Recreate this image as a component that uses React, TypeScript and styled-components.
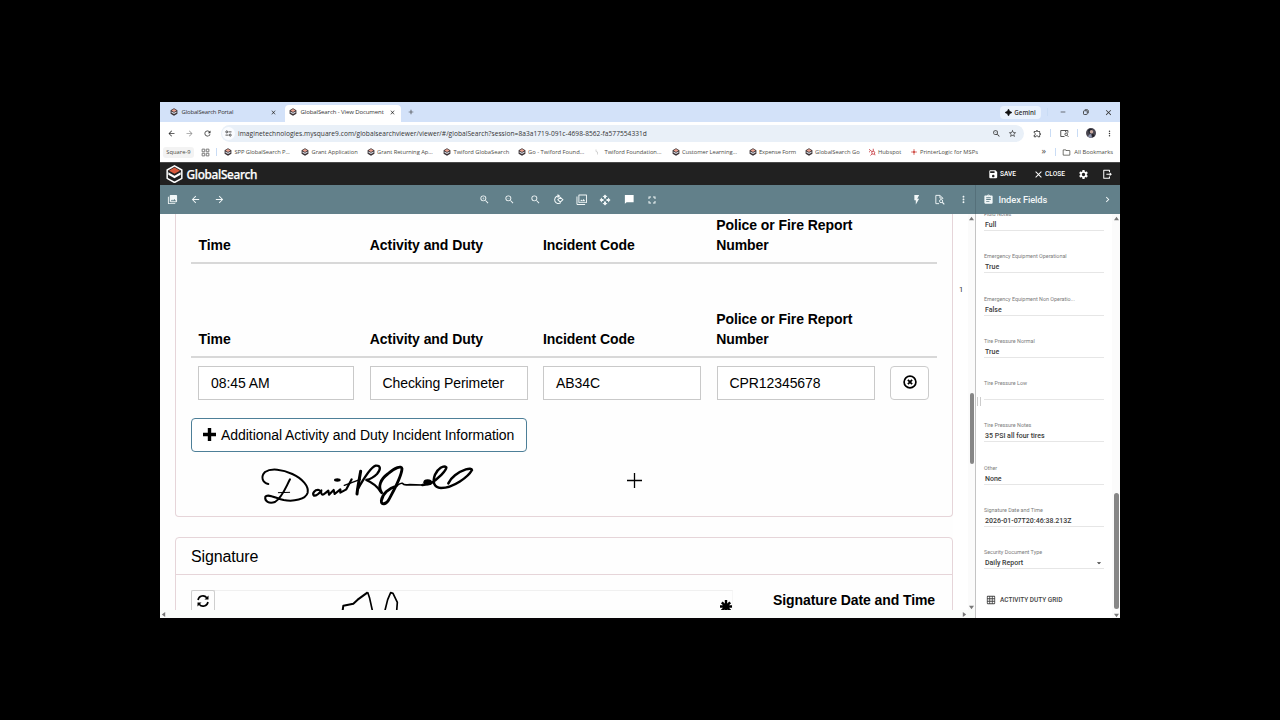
import React from "react";
import styled, { createGlobalStyle } from "styled-components";
import {
  MdPhotoLibrary, MdArrowBack, MdArrowForward, MdZoomIn, MdZoomOut, MdSearch, MdOpenWith,
  MdFullscreen, MdFlashOn, MdMoreVert, MdAssignment, MdChevronRight,
  MdSave, MdClose, MdSettings, MdRefresh, MdStarBorder, MdOutlineExtension, MdOutlineFolder, MdGridOn,
  MdFilter, MdRemove, MdAdd, MdArrowDropDown,
} from "react-icons/md";

const Global = createGlobalStyle`
  *{box-sizing:border-box}
  html,body{margin:0;background:#000;overflow:hidden}
`;

const Stage = styled.div`
  width:1280px;height:720px;padding:102px 160px;background:#000;
`;
const Browser = styled.div`
  width:960px;height:516px;display:flex;flex-direction:column;background:#fff;overflow:hidden;
  font-family:"Open Sans","Noto Sans",sans-serif;color:#333;
`;
const Spacer = styled.div<{ $w?: number }>`
  ${p => (p.$w === undefined ? "flex:1" : `flex:none;width:${p.$w}px`)};
`;
const IconSlot = styled.span<{ $w: number; $size: number; $color?: string }>`
  flex:none;width:${p => p.$w}px;display:flex;align-items:center;justify-content:center;
  color:${p => p.$color ?? "inherit"};
  svg{width:${p => p.$size}px;height:${p => p.$size}px;flex:none}
`;
const Label = styled.span<{ $size: number; $track?: number; $weight?: number; $color?: string; $w?: number }>`
  flex:none;white-space:nowrap;font-size:${p => p.$size}px;letter-spacing:${p => p.$track ?? 0}px;
  font-weight:${p => p.$weight ?? 400};color:${p => p.$color ?? "inherit"};
  ${p => (p.$w ? `width:${p.$w}px` : "")};
`;
const Divider = styled.span`
  flex:none;width:1px;height:8px;background:#c9dcf5;
`;

/* tab strip */
const TabStrip = styled.div`
  height:20px;flex:none;display:flex;align-items:center;background:#d3e2f9;
`;
const Tab = styled.div<{ $active?: boolean; $w: number }>`
  width:${p => p.$w}px;height:${p => (p.$active ? 17 : 20)}px;align-self:flex-end;flex:none;display:flex;align-items:center;
  padding-left:${p => (p.$active ? 4 : 10)}px;padding-bottom:${p => (p.$active ? 3 : 0)}px;
  background:${p => (p.$active ? "#fff" : "transparent")};border-radius:4px 4px 0 0;
`;
const GeminiPill = styled.div`
  width:41px;height:13px;border-radius:4px;background:#eaf2fd;display:flex;align-items:center;justify-content:center;gap:2px;
`;

/* address row */
const AddressRow = styled.div`
  height:22px;flex:none;display:flex;align-items:center;background:#fff;border-top-right-radius:4px;
`;
const AddressPill = styled.div`
  width:803px;height:17px;flex:none;border-radius:9px;background:#e9f0f8;display:flex;align-items:center;
`;
const SiteBadge = styled.span`
  width:13px;height:13px;margin:0 3px 0 1px;border-radius:50%;background:#fafcff;display:flex;align-items:center;justify-content:center;
`;

/* bookmarks */
const BookmarkBar = styled.div`
  height:18px;flex:none;display:flex;align-items:center;padding:0 7px 2px 3px;color:#4b4b45;
`;
const Chip = styled.span`
  width:31px;height:11px;border-radius:3px;background:#f3f3f3;display:flex;align-items:center;justify-content:center;
`;
const Bookmark = styled.div<{ $w: number }>`
  width:${p => p.$w}px;flex:none;display:flex;align-items:center;gap:2.5px;
  svg{flex:none}
`;
const More = styled.span`
  flex:none;font-size:9px;line-height:10px;margin-top:-2px;
`;

/* application header */
const AppHeader = styled.div`
  height:23px;flex:none;display:flex;align-items:center;background:#212121;border-top:1px solid #4a4a4a;color:#fff;
  font-family:Roboto,sans-serif;
`;
const Brand = styled.span`
  font-family:"Noto Sans","Open Sans",sans-serif;font-size:11.8px;line-height:20px;font-weight:500;letter-spacing:-0.3px;color:#fff;width:90px;
  -webkit-text-stroke:.25px #fff;
`;

/* tools */
const Tools = styled.div`
  height:29px;flex:none;display:flex;align-items:center;background:#62808a;color:#f2f7f8;font-family:Roboto,sans-serif;
`;
const PaneTools = styled.div`
  width:816px;height:100%;display:flex;align-items:center;border-right:1px solid #55707a;
`;
const PanelTitle = styled.div`
  flex:1;display:flex;align-items:center;
`;

/* body */
const Body = styled.div`
  flex:1;min-height:0;display:flex;
`;
const Viewer = styled.div`
  width:815px;flex:none;display:flex;flex-direction:column;
`;
const ViewerMain = styled.div`
  height:396px;flex:none;display:flex;
`;
const Page = styled.div`
  width:793px;flex:none;height:100%;overflow:hidden;padding-left:15px;background:#fefefe;color:#000;
  font-family:"Liberation Sans",Arial,sans-serif;font-size:14px;
`;
const Gutter = styled.div`
  width:15px;flex:none;padding:71px 0 0 6px;font-family:Roboto,sans-serif;font-size:7.5px;line-height:10px;color:#333;
`;
const Card = styled.section<{ $h: number; $top?: boolean }>`
  width:778px;height:${p => p.$h}px;border:1px solid #e6d5d9;background:#fefefe;
  ${p => (p.$top ? "border-top:0;border-radius:0 0 4px 4px;margin-bottom:20px;padding:0 15px" : "border-radius:4px 4px 0 0")};
`;
const HeadRow = styled.div<{ $h: number }>`
  display:grid;grid-template-columns:171.3px 173.2px 173.2px 173.6px 1fr;align-items:end;height:${p => p.$h}px;
  padding:0 0 7px 7.5px;border-bottom:2px solid #d8d8d8;font-weight:700;line-height:20px;letter-spacing:-0.07px;
`;
const Gap = styled.div<{ $h: number }>`
  height:${p => p.$h}px;
`;
const EntryRow = styled.div`
  display:grid;grid-template-columns:156px 158px 158px 158px 39px;column-gap:15.5px;padding:8px 0 0 7px;
`;
const Input = styled.div`
  height:34px;border:1px solid #c9c9c9;padding-left:12px;line-height:33px;letter-spacing:-0.08px;background:#fff;
`;
const SquareButton = styled.button`
  height:34px;padding:0;border:1px solid #ccc;border-radius:4px;background:#fff;display:flex;align-items:center;justify-content:center;
`;
const AddButton = styled.button`
  width:336px;height:34px;margin-top:18px;padding:0 0 0 11px;border:1px solid #4d7f98;border-radius:4px;background:#fff;color:#000;
  display:flex;align-items:center;gap:5px;font:14px "Liberation Sans",Arial,sans-serif;letter-spacing:-0.05px;white-space:nowrap;
`;
const Scribble = styled.svg`
  display:block;margin:8px 0 0 62px;
`;
const CardTitle = styled.div`
  height:37px;padding-left:15px;border-bottom:1px solid #e6d5d9;font-size:16px;line-height:37px;letter-spacing:-0.15px;
`;
const SignRow = styled.div`
  display:flex;padding:15px 0 0 15px;
`;
const SignPad = styled.div`
  width:542px;height:40px;border-top:1px solid #f0f0f0;border-right:1px solid #f6f6f6;display:flex;
`;
const ResetButton = styled.div`
  width:24px;height:30px;margin-top:-1px;border:1px solid #cfcfcf;border-bottom:0;border-radius:2px;padding:3px 0 0 5px;
`;
const SignLabel = styled.div`
  margin:0 0 0 40px;font-weight:700;line-height:20px;letter-spacing:-0.08px;
`;

const Scroll = styled.div<{ $w: number }>`
  width:${p => p.$w}px;flex:none;display:flex;flex-direction:column;align-items:center;background:#fbfbfb;padding-top:2px;
`;
const Thumb = styled.div<{ $w: number; $h: number }>`
  width:${p => p.$w}px;height:${p => p.$h}px;flex:none;border-radius:3px;background:#868686;
`;
const HScroll = styled.div`
  flex:1;display:flex;align-items:center;justify-content:space-between;padding:0 8px 0 1px;background:#f8fbf8;
`;

const Panel = styled.aside`
  position:relative;flex:1;display:flex;border-left:1px solid #c4c4c4;background:#fff;font-family:Roboto,sans-serif;overflow:hidden;
`;
const Fields = styled.div`
  width:136px;flex:none;padding-left:8px;margin-top:-3px;
`;
const Field = styled.div`
  height:42.25px;width:120px;
`;
const FieldName = styled.div`
  height:7px;line-height:6px;font-size:5.4px;letter-spacing:0;color:#7c7c7c;white-space:nowrap;
`;
const FieldValue = styled.div`
  height:13px;padding:2px 0 0 1px;line-height:10px;font-size:7px;font-weight:500;color:#3a3a3a;border-bottom:1px solid #e6e6e6;
  display:flex;justify-content:space-between;white-space:nowrap;
`;
const GridButton = styled.div`
  height:18px;display:flex;align-items:center;padding-left:2px;gap:4px;color:#444;
`;
const Grip = styled.div`
  position:absolute;left:1px;top:183px;width:4px;height:9px;border:solid #ccc;border-width:0 1px;
`;
const Cursor = styled.svg`
  display:block;margin:-37px 0 0 436px;
`;

const Cube = ({ s = 8 }: { s?: number }) => (
  <svg width={s} height={s} viewBox="0 0 16 16">
    <path d="M8 .5 14.8 4.3v7.4L8 15.5 1.2 11.7V4.3Z" fill="#3a3234" />
    <path d="M8 2.2 13 5 8 7.8 3 5Z" fill="#e9a08f" />
    <path d="M3 6.8 8 9.7 13 6.8v2.5L8 12.2 3 9.3Z" fill="#d9dbe4" />
  </svg>
);
const Logo = () => (
  <svg width="17" height="18" viewBox="0 0 51 54">
    <path d="M25.5 2.5 47.5 15v25L25.5 52.5 3.5 40V15Z" fill="#212121" stroke="#fff" strokeWidth="4.5" strokeLinejoin="round" />
    <path d="M25.5 7.5 42 17 25.5 26.5 9 17Z" fill="#d8593c" />
    <path d="M7 22 25.5 32.5 44 22v7L25.5 39.5 7 29Z" fill="#fff" />
  </svg>
);
const Sparkle = () => (
  <svg width="7" height="7" viewBox="0 0 10 10"><path d="M5 0Q5.8 4.2 10 5 5.8 5.8 5 10 4.2 5.8 0 5 4.2 4.2 5 0Z" fill="#111" stroke="#111" strokeWidth=".8" /></svg>
);
const Restore = () => (
  <svg viewBox="0 0 12 12" fill="none" stroke="#333" strokeWidth="1.7"><rect x="1" y="3.5" width="7.5" height="7.5" rx="1.5" /><path d="M3.5 1.5h5a2 2 0 0 1 2 2v5" /></svg>
);
const Tune = () => (
  <svg width="7" height="7" viewBox="0 0 14 14" fill="none" stroke="#444" strokeWidth="1.8"><circle cx="3.5" cy="3.8" r="2" /><path d="M7 3.8h6M1 10.2h6" /><circle cx="10.5" cy="10.2" r="2" /></svg>
);
const GridNine = () => (
  <svg viewBox="0 0 24 24" fill="none" stroke="#777" strokeWidth="2.6"><path d="M3 3h7v7H3zM14 3h7v7h-7zM3 14h7v7H3zM14 14h7v7h-7z" /></svg>
);
const SidePanelSearch = () => (
  <svg viewBox="0 0 24 24" fill="none" stroke="#444" strokeWidth="2.4"><path d="M12 20H2V4h19v6M15 4v4" /><circle cx="16.5" cy="14" r="3.5" /><path d="m19 17 3.5 4" /></svg>
);
const Avatar = () => (
  <svg viewBox="0 0 20 20"><circle cx="10" cy="10" r="10" fill="#4a4650" /><path d="M4 4q5-5 9 0l-2 6-5 1z" fill="#20242c" /><circle cx="11" cy="7.5" r="3.5" fill="#c9a9a0" /><path d="M4 17q2-6 6-5l2 7q-5 1-8-2Z" fill="#8b93ad" /><path d="M12 12q5 0 5 4l-4 3Z" fill="#1d1b22" /></svg>
);
const Hub = () => (
  <svg width="8" height="8" viewBox="0 0 16 16" fill="none" stroke="#c8434a" strokeWidth="1.8"><circle cx="10.5" cy="9.5" r="3" /><path d="M10.5 6.5V1.5M2 2.5l6.3 5M8.3 11.5 5 15M13 11.5l1 3M2 7l2 1" /></svg>
);
const Printer = () => (
  <svg width="8" height="8" viewBox="0 0 16 16" stroke="#d2564f" strokeWidth="1.5"><path d="M8 2v12M2 8h12" /><circle cx="8" cy="8" r="2.5" fill="#d2564f" stroke="none" /></svg>
);
const Faint = () => (
  <svg width="8" height="8" viewBox="0 0 16 16" fill="none" stroke="#b9b9b9" strokeWidth="1.2"><path d="M4 3v4l3 1v5" /></svg>
);
const Exit = () => (
  <svg viewBox="0 0 24 24" fill="none" stroke="#fff" strokeWidth="2.3"><path d="M17 7V3H4v18h13v-4" strokeLinejoin="round" /><path d="M10 12h10" /><path d="m17.5 7.5 5 4.5-5 4.5Z" fill="#fff" stroke="none" /></svg>
);
const RotatePage = () => (
  <svg viewBox="0 0 24 24" fill="none" stroke="currentColor" strokeWidth="2.2"><path d="M11 4.5A8.2 8.2 0 1 0 17 19" /><path d="m10 0 6 4.5L10 9Z" fill="currentColor" stroke="none" /><path d="m16 7.500 5.500 5-5.500 5-5.500-5Z" /></svg>
);
const Note = () => (
  <svg viewBox="0 0 24 24"><path d="M2 2h20v17H6l-4 3.500Z" fill="#fff" /></svg>
);
const PageSearch = () => (
  <svg viewBox="0 0 24 24" fill="none" stroke="currentColor" strokeWidth="2"><path d="M11 21H4V3h9l6 6v2M13 3v6h6" /><circle cx="15.5" cy="15.5" r="3.4" /><path d="m18 18 4.5 4.5" strokeWidth="2.4" /></svg>
);
const Tri = ({ d }: { d: "up" | "down" | "left" | "right" }) => {
  const shape = { up: "M3 1 6 5H0Z", down: "M0 1h6L3 5Z", left: "M1 3 5 0v6Z", right: "M5 3 1 0v6Z" }[d];
  return <svg width="5" height="5" viewBox="0 0 6 6" style={{ flex: "none" }}><path d={shape} fill="#777" /></svg>;
};

const bookmarks: [string, number, React.ReactNode, number][] = [
  ["SPP GlobalSearch P...", 77, <Cube />, -0.08],
  ["Grant Application", 65.5, <Cube />, -0.06],
  ["Grant Returning Ap...", 76.5, <Cube />, -0.05],
  ["Twiford GlobaSearch", 74.5, <Cube />, -0.03],
  ["Go - Twiford Found...", 76.5, <Cube />, 0],
  ["Twiford Foundation...", 77.5, <Faint />, -0.03],
  ["Customer Learning...", 77, <Cube />, -0.06],
  ["Expense Form", 56, <Cube />, -0.12],
  ["GlobalSearch Go", 63, <Cube />, -0.02],
  ["Hubspot", 42, <Hub />, 0],
  ["PrinterLogic for MSPs", 70, <Printer />, 0],
];

const fields: [string, string][] = [
  ["Fluid Notes", "Full"],
  ["Emergency Equipment Operational", "True"],
  ["Emergency Equipment Non Operatio...", "False"],
  ["Tire Pressure Normal", "True"],
  ["Tire Pressure Low", ""],
  ["Tire Pressure Notes", "35 PSI all four tires"],
  ["Other", "None"],
  ["Signature Date and Time", "2026-01-07T20:46:38.213Z"],
  ["Security Document Type", "Daily Report"],
];

const Headings = () => (
  <HeadRow $h={50}>
    <span>Time</span><span>Activity and Duty</span><span>Incident Code</span><span>Police or Fire Report<br />Number</span>
  </HeadRow>
);

export default function App() {
  return (
    <Stage>
      <Global />
      <Browser>
        <TabStrip>
          <Tab $w={125}>
            <Cube /><Spacer $w={3.5} />
            <Label $size={6} $track={-0.18} $w={87}>GlobalSearch Portal</Label>
            <IconSlot $w={10} $size={7}><MdClose /></IconSlot>
          </Tab>
          <Tab $w={116} $active>
            <Cube /><Spacer $w={3.5} />
            <Label $size={6} $track={-0.1} $w={87}>GlobalSearch - View Document</Label>
            <IconSlot $w={10} $size={7}><MdClose /></IconSlot>
          </Tab>
          <Spacer $w={4.5} />
          <IconSlot $w={10} $size={8}><MdAdd /></IconSlot>
          <Spacer />
          <GeminiPill><Sparkle /><Label $size={6.2} $weight={600}>Gemini</Label></GeminiPill>
          <Spacer $w={6} /><Divider /><Spacer $w={8.5} />
          <IconSlot $w={12} $size={8}><MdRemove /></IconSlot>
          <Spacer $w={11} />
          <IconSlot $w={12} $size={6}><Restore /></IconSlot>
          <Spacer $w={11} />
          <IconSlot $w={12} $size={9}><MdClose /></IconSlot>
          <Spacer $w={5.5} />
        </TabStrip>

        <AddressRow>
          <Spacer $w={6} />
          <IconSlot $w={10} $size={9}><MdArrowBack /></IconSlot><Spacer $w={8} />
          <IconSlot $w={10} $size={9} $color="#999"><MdArrowForward /></IconSlot><Spacer $w={8} />
          <IconSlot $w={10} $size={9}><MdRefresh /></IconSlot><Spacer $w={9} />
          <AddressPill>
            <SiteBadge><Tune /></SiteBadge>
            <Label $size={6.6} $track={0.045}>imaginetechnologies.mysquare9.com/globalsearchviewer/viewer/#/globalSearch?session=8a3a1719-091c-4698-8562-fa577554331d</Label>
            <Spacer />
            <IconSlot $w={10} $size={9}><MdZoomOut /></IconSlot><Spacer $w={6} />
            <IconSlot $w={10} $size={9}><MdStarBorder /></IconSlot><Spacer $w={7} />
          </AddressPill>
          <Spacer $w={8} />
          <IconSlot $w={10} $size={9}><MdOutlineExtension /></IconSlot>
          <Spacer $w={8} /><Divider /><Spacer $w={8} />
          <IconSlot $w={10} $size={9}><SidePanelSearch /></IconSlot>
          <Spacer $w={8} /><Divider /><Spacer $w={7.5} />
          <IconSlot $w={11} $size={10}><Avatar /></IconSlot>
          <Spacer $w={7.5} />
          <IconSlot $w={10} $size={9}><MdMoreVert /></IconSlot>
        </AddressRow>

        <BookmarkBar>
          <Chip><Label $size={5.8} $track={0}>Square-9</Label></Chip>
          <Spacer $w={6} />
          <IconSlot $w={10} $size={9}><GridNine /></IconSlot>
          <Spacer $w={6} /><Divider /><Spacer $w={7} />
          {bookmarks.map(([name, w, icon, track]) => (
            <Bookmark key={name} $w={w}>{icon}<Label $size={5.8} $track={track}>{name}</Label></Bookmark>
          ))}
          <Spacer />
          <More>»</More>
          <Spacer $w={9} /><Divider /><Spacer $w={6} />
          <IconSlot $w={10} $size={9}><MdOutlineFolder /></IconSlot><Spacer $w={2.5} />
          <Label $size={5.8} $track={0}>All Bookmarks</Label>
        </BookmarkBar>

        <AppHeader>
          <Spacer $w={6} /><Logo /><Spacer $w={3.5} /><Brand>GlobalSearch</Brand>
          <Spacer />
          <IconSlot $w={10} $size={10.5}><MdSave /></IconSlot><Spacer $w={2} />
          <Label $size={6.6} $weight={500} $w={33}>SAVE</Label>
          <IconSlot $w={10} $size={11}><MdClose /></IconSlot><Spacer $w={2} />
          <Label $size={6.6} $weight={500} $w={32.5}>CLOSE</Label>
          <IconSlot $w={12} $size={11}><MdSettings /></IconSlot><Spacer $w={11.5} />
          <IconSlot $w={12} $size={10.5}><Exit /></IconSlot><Spacer $w={7} />
        </AppHeader>

        <Tools>
          <PaneTools>
            <Spacer $w={0.5} />
            <IconSlot $w={23.5} $size={11}><MdPhotoLibrary /></IconSlot>
            <IconSlot $w={23.5} $size={11}><MdArrowBack /></IconSlot>
            <IconSlot $w={23.5} $size={11}><MdArrowForward /></IconSlot>
            <Spacer $w={240.5} />
            <IconSlot $w={25} $size={11}><MdZoomIn /></IconSlot>
            <IconSlot $w={26} $size={11}><MdZoomOut /></IconSlot>
            <IconSlot $w={25} $size={11}><MdSearch /></IconSlot>
            <IconSlot $w={22.5} $size={11}><RotatePage /></IconSlot>
            <IconSlot $w={23.5} $size={11.5}><MdFilter /></IconSlot>
            <IconSlot $w={23.5} $size={12}><MdOpenWith /></IconSlot>
            <IconSlot $w={23.5} $size={10.5}><Note /></IconSlot>
            <IconSlot $w={23} $size={12}><MdFullscreen /></IconSlot>
            <Spacer />
            <IconSlot $w={23.5} $size={11.5}><MdFlashOn /></IconSlot>
            <IconSlot $w={23.5} $size={11}><PageSearch /></IconSlot>
            <IconSlot $w={23.5} $size={11}><MdMoreVert /></IconSlot>
          </PaneTools>
          <PanelTitle>
            <Spacer $w={7} />
            <IconSlot $w={11} $size={11}><MdAssignment /></IconSlot><Spacer $w={4.5} />
            <Label $size={9.3} $weight={500} $track={-0.1}>Index Fields</Label>
            <Spacer />
            <IconSlot $w={12} $size={11}><MdChevronRight /></IconSlot><Spacer $w={7} />
          </PanelTitle>
        </Tools>

        <Body>
          <Viewer>
            <ViewerMain>
              <Page>
                <Card $h={303} $top>
                  <Headings />
                  <Gap $h={44} />
                  <Headings />
                  <EntryRow>
                    <Input>08:45 AM</Input>
                    <Input>Checking Perimeter</Input>
                    <Input>AB34C</Input>
                    <Input>CPR12345678</Input>
                    <SquareButton>
                      <svg width="14" height="16" viewBox="0 0 14 16" fill="none" stroke="#000"><circle cx="7" cy="7" r="5.9" strokeWidth="1.7" /><path d="m4.9 4.9 4.2 4.2m0-4.2L4.9 9.1" strokeWidth="1.8" /></svg>
                    </SquareButton>
                  </EntryRow>
                  <AddButton>
                    <svg width="13" height="14" viewBox="0 0 13 14"><path d="M6.5 0v13M0 6.5h13" stroke="#000" strokeWidth="3.4" /></svg>
                    Additional Activity and Duty Incident Information
                  </AddButton>
                  <Scribble width="230" height="50" viewBox="0 0 690 150" fill="none" stroke="#000" strokeLinecap="round" strokeLinejoin="round">
                    <path strokeWidth="6" d="M46 72C28 68 22 50 36 36C54 24 88 28 118 42C148 56 168 78 164 98C158 118 122 126 92 120C68 114 44 100 37 110C34 124 48 132 66 126C88 112 98 82 111 58" />
                    <path strokeWidth="3" d="M76 98 110 97" />
                    <path strokeWidth="6.5" d="M198 90C186 88 176 100 183 107C192 108 200 98 205 91C202 102 208 108 216 100L226 92 228 104 242 90 245 102 262 88 262 98 280 88 296 58" />
                    <ellipse cx="253" cy="60" rx="10" ry="5" fill="#000" stroke="none" />
                    <path strokeWidth="4.500" d="M274 76 322 58" />
                    <path strokeWidth="9" d="M323 34C319 58 314 80 312 102" />
                    <path strokeWidth="7" d="M314 88C332 56 352 22 368 17C384 16 384 28 372 42C362 52 350 58 340 60C358 68 372 78 382 94" />
                    <path strokeWidth="8.500" d="M386 98C374 80 382 58 404 42C426 22 446 16 447 26C446 50 422 92 408 118C400 134 384 136 385 122C388 102 408 84 430 78" />
                    <path strokeWidth="5" d="M428 80C436 74 442 68 448 70C454 78 462 74 470 74L508 75" />
                    <ellipse cx="524" cy="67" rx="13" ry="9" fill="#000" stroke="none" />
                    <path strokeWidth="7.500" d="M508 75L532 71C556 56 580 32 580 22C572 14 554 26 546 44C538 66 542 82 564 84C602 84 646 50 657 30C656 20 626 30 606 46C596 54 590 62 586 70" />
                  </Scribble>
                  <Cursor width="15" height="15" viewBox="0 0 15 15"><path d="M7.5 0v15M0 7.5h15" stroke="#000" strokeWidth="1.3" /></Cursor>
                </Card>
                <Card $h={90}>
                  <CardTitle>Signature</CardTitle>
                  <SignRow>
                    <SignPad>
                      <ResetButton>
                        <svg width="12" height="12" viewBox="0 0 12 12" fill="none" stroke="#000" strokeWidth="1.6"><path d="M1 5a5 5 0 0 1 8.8-2.2M11 7a5 5 0 0 1-8.800 2.200" /><path d="M11.5.6v4H7.5ZM.5 11.4v-4h4Z" fill="#000" stroke="none" /></svg>
                      </ResetButton>
                      <Spacer $w={126} />
                      <svg width="60" height="22" viewBox="0 0 180 66" fill="none" stroke="#000" strokeWidth="6" strokeLinejoin="round"><path d="M5 58 7 44 37 38 50 26 80 4" /><path d="M80 4 86 22 94 58M132 58 140 26 149 5 156 7 169 34 167 60" strokeWidth="5" /></svg>
                      <Spacer />
                      <svg width="13" height="22" viewBox="0 0 13 22"><path d="M7 9v13M1 15.5h12M2.8 11.3l8.4 8.4M11.2 11.3l-8.4 8.4" stroke="#000" strokeWidth="2.4" /></svg>
                    </SignPad>
                    <SignLabel>Signature Date and Time</SignLabel>
                  </SignRow>
                </Card>
              </Page>
              <Gutter>1</Gutter>
              <Scroll $w={7}><Tri d="up" /><Gap $h={172} /><Thumb $w={4} $h={71} /><Spacer /><Tri d="down" /></Scroll>
            </ViewerMain>
            <HScroll><Tri d="left" /><Tri d="right" /></HScroll>
          </Viewer>
          <Panel>
            <Fields>
              {fields.map(([name, value], i) => (
                <Field key={name}>
                  <FieldName>{name}</FieldName>
                  <FieldValue>{value}{i === 8 && <MdArrowDropDown size={10} />}</FieldValue>
                </Field>
              ))}
              <GridButton><MdGridOn size={10} /><Label $size={6.5} $weight={500}>ACTIVITY DUTY GRID</Label></GridButton>
            </Fields>
            <Scroll $w={8}><Tri d="up" /><Gap $h={272} /><Thumb $w={5} $h={116} /><Spacer /><Tri d="down" /></Scroll>
            <Grip />
          </Panel>
        </Body>
      </Browser>
    </Stage>
  );
}
